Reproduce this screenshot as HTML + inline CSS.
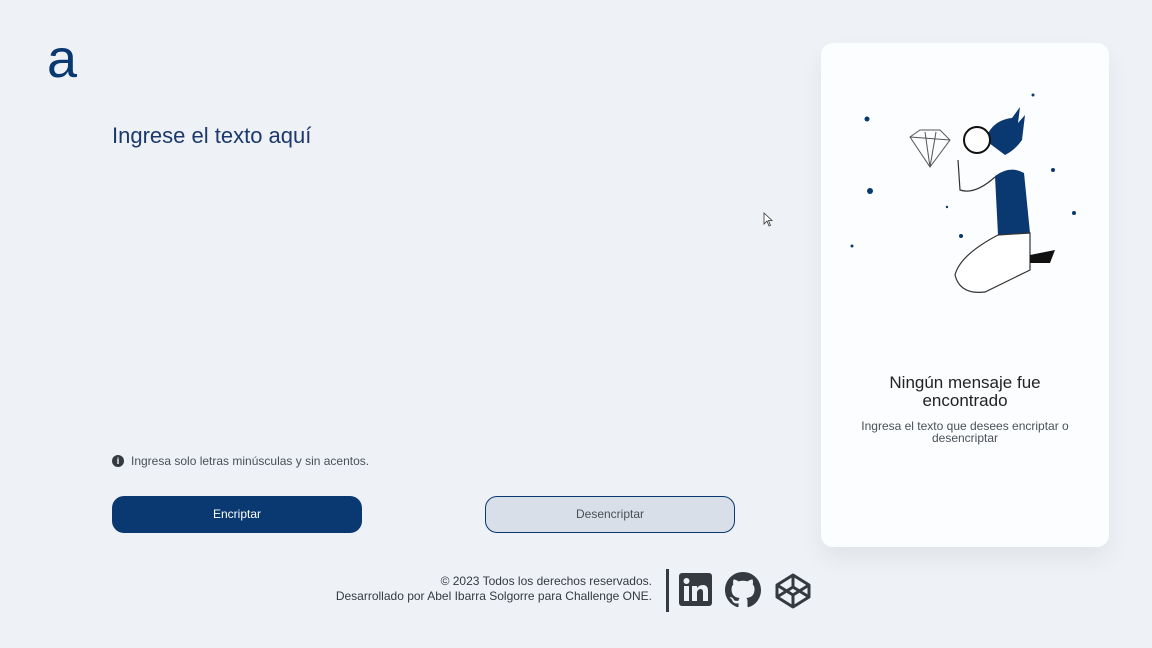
<!DOCTYPE html>
<html><head><meta charset="utf-8"><style>
*{margin:0;padding:0;box-sizing:border-box}
body{width:1152px;height:648px;overflow:hidden;background:#eef1f6;font-family:"Liberation Sans",sans-serif;position:relative}
.abs{position:absolute}
.logo{left:47px;top:32px;font-size:54px;color:#0a3871;font-weight:normal;line-height:54px}
.title{left:112px;top:123px;font-size:22px;color:#1b3a6b}
.info{left:112px;top:454px;font-size:12px;color:#495057;display:flex;align-items:center;gap:7px}
.info i{width:12px;height:12px;border-radius:50%;background:#343a40;color:#fff;font-size:9px;font-style:normal;font-weight:bold;text-align:center;line-height:12px}
.btn{top:496px;width:250px;height:37px;border-radius:12px;font-size:12px;text-align:center;line-height:37px}
.b1{left:112px;background:#0a3871;color:#fff}
.b2{left:485px;background:#d8dfe8;border:1px solid #0a3871;color:#495057;line-height:35px}
.card{left:821px;top:43px;width:288px;height:504px;background:#fcfdfe;border-radius:12px;box-shadow:0 12px 24px rgba(0,0,0,.06)}
.h{left:821px;width:288px;top:374px;text-align:center;font-size:17px;color:#222;line-height:18px}
.p{left:845px;width:240px;top:420px;text-align:center;font-size:12px;color:#495057;line-height:12px}
.foot{right:500px;top:574px;text-align:right;font-size:12px;color:#343a40;line-height:15px}
.bar{left:666px;top:569px;width:3px;height:43px;background:#343a40}
</style></head><body>
<div class="abs logo">a</div>
<div class="abs title">Ingrese el texto aquí</div>
<div class="abs info"><i>i</i>Ingresa solo letras minúsculas y sin acentos.</div>
<div class="abs btn b1">Encriptar</div>
<div class="abs btn b2">Desencriptar</div>
<div class="abs card"></div>
<svg class="abs" style="left:840px;top:85px" width="250" height="220" viewBox="0 0 250 220">
<g fill="#0a3871"><circle cx="27" cy="34" r="2.5"/><circle cx="193" cy="10" r="1.5"/><circle cx="30" cy="106" r="3"/><circle cx="213" cy="85" r="2"/><circle cx="234" cy="128" r="2"/><circle cx="12" cy="161" r="1.5"/><circle cx="121" cy="151" r="2"/><circle cx="107" cy="122" r="1.2"/></g>
<path d="M70 52 L80 45 L100 45 L110 55 L90 82 Z M70 52 L110 55 M85 47 L90 82 M96 47 L90 82" fill="none" stroke="#555" stroke-width="1"/>
<path d="M145 55 Q152 35 172 33 L180 22 L178 38 L185 30 L182 55 Q175 65 165 70 Z" fill="#0a3871"/>
<circle cx="137" cy="55" r="13" fill="#fff" stroke="#111" stroke-width="2"/>
<path d="M155 91 Q170 80 184 88 L190 148 Q170 155 158 150 Z" fill="#0a3871"/>
<path d="M158 150 Q120 170 115 190 Q120 210 145 207 L190 185 L190 148 Z" fill="#fff" stroke="#333" stroke-width="1.2"/>
<path d="M190 170 L215 165 L210 178 L190 178Z" fill="#111"/>
<path d="M155 92 Q135 110 120 105 L118 75" fill="none" stroke="#333" stroke-width="1.2"/>
</svg>
<div class="abs h">Ningún mensaje fue<br>encontrado</div>
<div class="abs p">Ingresa el texto que desees encriptar o desencriptar</div>
<div class="abs foot">© 2023 Todos los derechos reservados.<br>Desarrollado por Abel Ibarra Solgorre para Challenge ONE.</div>
<div class="abs bar"></div>
<svg class="abs" style="left:679px;top:573px" width="34" height="34" viewBox="0 0 34 34"><rect width="33" height="33" rx="3" fill="#343a40"/><rect x="5" y="13" width="5" height="15" fill="#eef1f6"/><circle cx="7.5" cy="8" r="3" fill="#eef1f6"/><path d="M13 13h5v2q2-3 6-3q5 0 5 6v10h-5v-9q0-3-2.5-3t-3.5 3v9h-5z" fill="#eef1f6"/></svg>
<svg class="abs" style="left:725px;top:572px" width="36" height="36" viewBox="0 0 16 16"><path fill="#343a40" d="M8 0C3.580 0 0 3.58 0 8c0 3.54 2.29 6.53 5.47 7.590.4.07.55-.17.55-.38v-1.33c-2.23.48-2.7-1.070-2.7-1.070-.36-.92-.89-1.17-.89-1.170-.73-.5.06-.49.06-.49.8.06 1.23.83 1.23.83.71 1.23 1.87.87 2.33.66.07-.52.28-.87.51-1.07-1.78-.2-3.64-.89-3.64-3.95 0-.87.31-1.59.82-2.15-.08-.2-.36-1.02.08-2.12 0 0 .67-.21 2.2.82a7.6 7.6 0 0 1 4 0c1.53-1.04 2.2-.82 2.2-.82.44 1.1.16 1.92.08 2.12.51.56.82 1.27.82 2.15 0 3.07-1.87 3.75-3.65 3.95.29.25.54.73.54 1.48v2.2c0 .21.15.46.55.38A8 8 0 0 0 16 8c0-4.42-3.58-8-8-8z"/></svg>
<svg class="abs" style="left:774px;top:572px" width="38" height="38" viewBox="0 0 38 38"><g fill="none" stroke="#343a40" stroke-width="3" stroke-linejoin="round"><path d="M19 3L35 13V25L19 35L3 25V13Z"/><path d="M3 13L19 23L35 13M3 25L19 15L35 25M19 3V15M19 23V35"/></g></svg>
<svg class="abs" style="left:763px;top:212px" width="10" height="15" viewBox="0 0 10 15"><path d="M1 1V12L4 9L6 14L7.5 13.3L5.5 8.5H9Z" fill="#fff" stroke="#333" stroke-width="0.8"/></svg>
</body></html>
